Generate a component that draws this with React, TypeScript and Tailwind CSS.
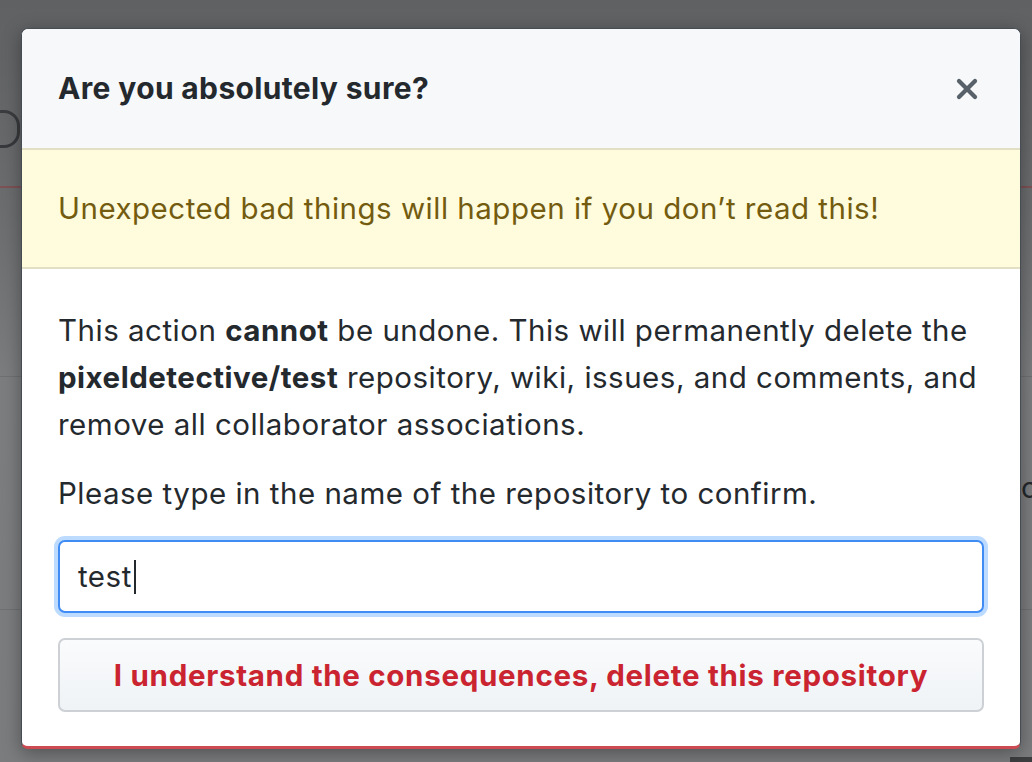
import { X } from "lucide-react";

const font = { fontFamily: "Inter, 'Noto Sans', 'Liberation Sans', sans-serif" };

function PageBehind() {
  // faint fragments of the page under the backdrop
  return (
    <div className="absolute inset-0">
      <div className="absolute left-[-40px] top-[110px] h-[38px] w-[60px] rounded-r-[16px] border-[3px] border-[#202327]" />
      <div className="absolute left-0 right-0 top-[186px] h-[2px] bg-[#8c4b52]" />
      <div className="absolute left-0 right-0 top-[376px] h-px bg-[#6f7072]" />
      <div className="absolute left-0 right-0 top-[609px] h-px bg-[#6f7072]" />
      <div className="absolute left-[1021px] top-[468px] text-[29px] leading-[40px] text-[#25282c]" style={font}>
        c
      </div>
      <div className="absolute bottom-0 right-0 h-[5px] w-[22px] bg-[#3d3e40]" />
    </div>
  );
}

export default function App() {
  return (
    <div
      className="relative h-[762px] w-full overflow-hidden bg-gradient-to-b from-[#656668] via-[#7c7d7f] to-[#7b7c7e]"
      style={font}
    >
      <PageBehind />
      <div className="absolute inset-0 bg-gradient-to-b from-[#5d5e60]/60 via-transparent to-transparent" />

      <div className="relative flex pl-[21px] pt-[28px]">
        <div className="flex w-[1000px] flex-col overflow-hidden rounded-[7px] border border-[#454c54] border-b-[3px] border-b-[#cc4b53] bg-white shadow-[0_4px_18px_rgba(0,0,0,0.35)]">
          <div className="flex h-[119px] items-center justify-between bg-[#f6f8fa] pl-[36px] pr-[37px]">
            <h3 className="text-[30px] font-bold tracking-[0.35px] text-[#24292e]">Are you absolutely sure?</h3>
            <X size={32} strokeWidth={3.2} className="text-[#586069]" />
          </div>

          <div className="flex h-[121px] items-center border-y-2 border-[#e2dfc4] bg-[#fffbdd] px-[36px] text-[29.5px] tracking-[0.5px] text-[#735c0f]">
            Unexpected bad things will happen if you don’t read this!
          </div>

          <div className="flex flex-col px-[36px] pb-[34px] pt-[38px] text-[29.5px] leading-[47px] tracking-[0.5px] text-[#24292e]">
            <p>
              This action <strong>cannot</strong> be undone. This will permanently delete the{" "}
              <strong>pixeldetective/test</strong> repository, wiki, issues, and comments, and remove all
              collaborator associations.
            </p>
            <p className="mt-[22px]">Please type in the name of the repository to confirm.</p>

            <div className="mt-[23px] flex h-[73px] items-center rounded-[7px] border-2 border-[#3f8cf5] bg-white px-[18px] shadow-[0_0_0_4px_rgba(33,136,255,0.3)]">
              <span>test</span>
              <span className="ml-[2px] h-[34px] w-[2px] bg-[#24292e]" />
            </div>

            <button
              type="button"
              className="mt-[25px] flex h-[74px] items-center justify-center rounded-[7px] border-2 border-[#cdd1d5] bg-gradient-to-b from-[#fafbfc] to-[#eff3f6] text-[29.5px] font-bold tracking-[0.7px] text-[#cb2431]"
            >
              I understand the consequences, delete this repository
            </button>
          </div>
        </div>
      </div>
    </div>
  );
}
